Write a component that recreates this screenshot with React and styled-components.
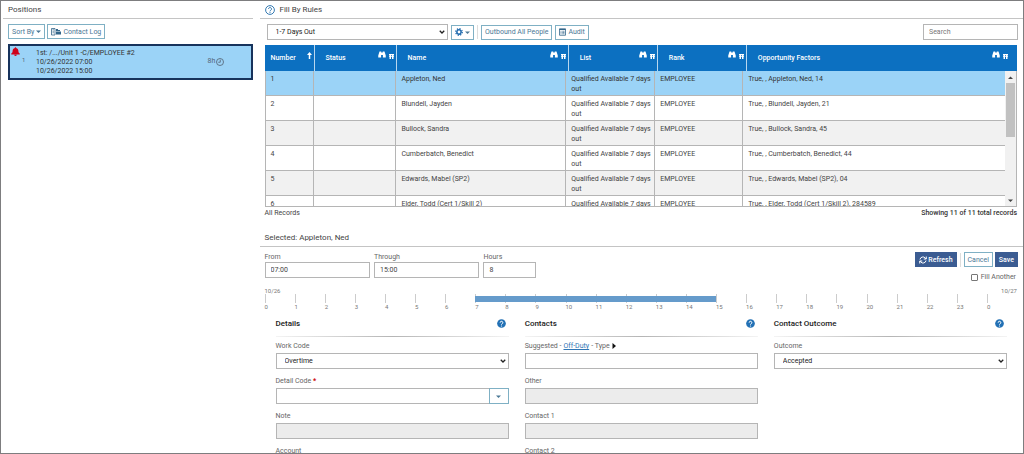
import React from "react";
import styled, { createGlobalStyle, css } from "styled-components";

const GlobalStyle = createGlobalStyle`
  *, *::before, *::after { box-sizing: border-box; }
  body {
    margin: 0;
    background: #fff;
    color: #444;
    font: 400 7px/10px Roboto, "Liberation Sans", sans-serif;
  }
  button, input, select { font: inherit; color: inherit; margin: 0; border-radius: 0; }
  h1, h2, h3, p { margin: 0; font: inherit; }
  svg { display: block; flex: none; }
`;

const Frame = styled.div`
  display: grid;
  grid-template-columns: minmax(0, 1fr) minmax(0, 3fr);
  height: 100vh;
  overflow: hidden;
  border: 1px solid #7d7d7f;
`;

const Sidebar = styled.aside`
  padding: 0 4px 0 2px;
`;

const Main = styled.main`
  padding-left: 3px;
`;

const Heading = styled.h2`
  display: flex;
  align-items: center;
  gap: 5px;
  height: 18px;
  padding-left: 5px;
  border-bottom: 1px solid #c4c4c4;
  font-size: 8px;
  line-height: 18px;
  color: #444;
`;

const Toolbar = styled.div`
  display: flex;
  align-items: center;
  gap: 2px;
  padding: 5px 0 5px 5px;
`;

const RulesToolbar = styled(Toolbar)`
  gap: 3px;
  padding-left: 7px;
`;

const Divider = styled.span`
  width: 1px;
  height: 14px;
  margin: 0 ${(p) => p.$gap || 0}px;
  background: #ddd;
`;

const Button = styled.button`
  display: flex;
  align-items: center;
  justify-content: center;
  gap: ${(p) => (p.$primary ? 1 : 2)}px;
  height: 15px;
  padding: 0 3px;
  border: 1px solid ${(p) => (p.$primary ? "#3b5c92" : "#7fb0c4")};
  background: ${(p) => (p.$primary ? "#3b5c92" : "#fff")};
  color: ${(p) => (p.$primary ? "#fff" : "#4a7896")};
  font-weight: ${(p) => (p.$primary ? 500 : 400)};
  white-space: nowrap;
`;

const PositionCard = styled.article`
  display: grid;
  grid-template-columns: 24px 1fr 44px;
  margin: 0 0 0 5px;
  height: 36px;
  border: 1px solid #17335c;
  outline: 1px solid #17335c;
  outline-offset: -2px;
  background: #9bd3f7;
  color: #333;
  line-height: 9px;
`;

const Alert = styled.div`
  display: flex;
  gap: 2px;
  padding: 2px 0 0 2px;
  line-height: 25px;
  color: #567;
  font-size: 6px;
`;

const PositionText = styled.div`
  padding: 4px 0 0 3px;
`;

const Duration = styled.div`
  display: flex;
  align-items: center;
  align-self: start;
  gap: 1px;
  padding-top: 12px;
  color: #567;
`;

const SelectBox = styled.div`
  display: grid;
  align-items: center;
  width: ${(p) => p.$width || "100%"};
  height: 16px;
  > * { grid-area: 1 / 1; }
  > svg { justify-self: end; margin-right: 3px; pointer-events: none; }
`;

const NativeSelect = styled.select`
  appearance: none;
  width: 100%;
  height: 100%;
  padding: 0 8px;
  border: 1px solid #b5b5b5;
  background: #fff;
  color: #222;
`;

const TextInput = styled.input`
  display: block;
  width: ${(p) => p.$width || "100%"};
  min-width: 0;
  height: ${(p) => p.$height || 16}px;
  padding: 0 5px;
  border: 1px solid #b5b5b5;
  background: #fff;
  &:disabled { background: #ececec; }
  &::placeholder { color: #777; }
`;

const Search = styled(TextInput)`
  margin-left: auto;
  margin-right: 5px;
`;

const Records = styled.section`
  margin: 0 6px 0 5px;
`;

const columns = (list) => css`
  display: grid;
  grid-template-columns: ${list.map((n) => `minmax(0, ${n}fr)`).join(" ")};
`;

const HeadTable = styled.table`
  display: block;
  thead { display: block; }
  tr { ${columns([50, 82, 172, 89, 89, 270])} }
  th {
    display: flex;
    justify-content: space-between;
    height: 26px;
    padding: 0 2px 0 11px;
    border-right: 1px solid #b9d7ef;
    background: #0c70c1;
    color: #fff;
    font-weight: 500;
    line-height: 26px;
    text-align: left;
  }
  th:first-child { padding-left: 6px; }
  th:last-child { border-right: 0; padding-right: 9px; }
`;

const HeadIcons = styled.span`
  display: flex;
  align-items: flex-end;
  gap: 3px;
  height: 14px;
  > svg:first-child:not(:last-child) { margin-bottom: 1px; }
`;

const BodyArea = styled.div`
  display: flex;
  height: 136px;
  border: 1px solid #b5b5b5;
  border-top: 0;
  overflow: hidden;
`;

const BodyTable = styled.table`
  display: block;
  flex: 1;
  tbody { display: block; }
  tr {
    ${columns([49, 82, 170, 89, 88, 262])}
    background: #fff;
    border-bottom: 1px solid #b5b5b5;
  }
  tr:nth-child(odd) { background: #f1f1f1; }
  tr:first-child { background: #9bd3f7; color: #333; }
  td { padding: 3px 1px 1px 5px; border-right: 1px solid #b5b5b5; min-height: 24px; }
  td:last-child { border-right: 0; }
`;

const ScrollTrack = styled.div`
  display: flex;
  flex-direction: column;
  align-items: center;
  width: 11px;
  background: #f1f1f1;
`;

const ScrollButton = styled.button`
  display: flex;
  align-items: center;
  justify-content: center;
  width: 100%;
  height: 12px;
  padding: 0;
  border: 0;
  background: #f1f1f1;
  color: #444;
`;

const ScrollThumb = styled.div`
  width: 9px;
  height: 54px;
  margin-bottom: auto;
  background: #c1c1c1;
`;

const RecordsFooter = styled.footer`
  display: flex;
  justify-content: space-between;
  padding-top: 1px;
`;

const RecordCount = styled.span`
  color: #333;
  font-weight: 500;
`;

const SelectedHeading = styled(Heading)`
  margin-top: 11px;
`;

const ShiftForm = styled.form`
  display: flex;
  gap: 4px;
  padding: 5px 5px 0 5px;
`;

const Field = styled.div`
  width: ${(p) => p.$width};
`;

const Label = styled.label`
  display: block;
  color: #666;
`;

const Actions = styled.div`
  display: grid;
  justify-items: end;
  gap: 5px;
  margin-left: auto;
`;

const ButtonRow = styled.div`
  display: flex;
  align-items: center;
  gap: 2px;
`;

const CheckLabel = styled.label`
  display: flex;
  align-items: center;
  gap: 3px;
  padding-right: 2px;
  color: #666;
`;

const Checkbox = styled.input`
  appearance: none;
  width: 7px;
  height: 7px;
  border: 1px solid #777;
  border-radius: 1px;
  background: #fff;
  &:checked { background: #0c70c1; }
`;

const Timeline = styled.section`
  padding: 5px 6px 0 5px;
  font-size: 6px;
  color: #777;
`;

const TimelineDates = styled.div`
  display: flex;
  justify-content: space-between;
  line-height: 7px;
`;

const Hours = styled.div`
  display: grid;
  grid-template-columns: repeat(25, minmax(0, 1fr));
`;

const Hour = styled.span`
  grid-area: 1 / ${(p) => p.$col};
  line-height: 7px;
  &::before {
    content: "";
    display: block;
    height: 9px;
    border-left: 1px solid #ccc;
  }
`;

const ShiftBar = styled.div`
  grid-area: 1 / ${(p) => p.$from} / 2 / ${(p) => p.$to};
  height: 6px;
  margin-top: 2px;
  background: #659bcb;
`;

const Panels = styled.div`
  display: grid;
  grid-template-columns: repeat(3, minmax(0, 1fr));
  gap: 16px;
  padding: 8px 16px 0;
`;

const PanelTitle = styled.h3`
  display: flex;
  align-items: center;
  justify-content: space-between;
  height: 19px;
  padding: 0 3px 7px 0;
  margin-bottom: 4px;
  border-bottom: 1px solid;
  border-image: linear-gradient(90deg, #f4f4f4, #b5b5b5 50%, #f4f4f4) 1;
  color: #222;
  font-size: 8px;
  font-weight: 500;
`;

const PanelField = styled.div`
  margin-bottom: 7px;
  > ${Label}, > p { margin-bottom: 2px; color: #666; }
`;

const SuggestedLine = styled.p`
  display: flex;
  align-items: center;
  gap: 2px;
  a { color: #2f76b5; }
`;

const Required = styled.span`
  color: #c00;
  font-weight: 700;
`;

const Combo = styled.div`
  display: flex;
`;

const ComboButton = styled(Button)`
  flex: none;
  width: 20px;
  height: 16px;
  padding: 0;
  margin-left: -1px;
`;

const Caret = () => (
  <svg width="5" height="5" viewBox="0 0 10 10" aria-hidden="true">
    <path d="M0 3h10L5 8z" fill="currentColor" />
  </svg>
);

const CaretUp = () => (
  <svg width="5" height="5" viewBox="0 0 10 10" aria-hidden="true">
    <path d="M0 8h10L5 3z" fill="currentColor" />
  </svg>
);

const Chevron = () => (
  <svg width="6" height="6" viewBox="0 0 12 12" aria-hidden="true">
    <path d="M1.500 3.500L6 8l4.500-4.500" fill="none" stroke="#222" strokeWidth="2.600" />
  </svg>
);

const Bell = () => (
  <svg width="9" height="9" viewBox="0 0 18 18" aria-hidden="true">
    <path d="M9 0.500a1.300 1.300 0 0 1 1.300 1.600C13 2.800 14.800 5 14.800 8c0 3 .7 3.500 2.700 5V15H.5v-2C2.500 11.500 3.200 11 3.200 8c0-3 1.800-5.200 4.500-5.900A1.300 1.300 0 0 1 9 .5zM6.500 15.500h5a2.500 2.500 0 0 1-5 0z" fill="#d0021b" />
  </svg>
);

const Clock = () => (
  <svg width="8" height="8" viewBox="0 0 16 16" fill="none" stroke="#567" strokeWidth="1.700" aria-hidden="true">
    <circle cx="8" cy="8" r="7" />
    <path d="M8.500 3.500v5H4.500" />
  </svg>
);

const ContactIcon = () => (
  <svg width="10" height="8" viewBox="0 0 20 16" aria-hidden="true">
    <path d="M1 1h7v13H1z" fill="none" stroke="#33668a" strokeWidth="1.600" />
    <path d="M3 3.500h3M3 6.500h3M3 9.500h3" stroke="#33668a" strokeWidth="1.300" />
    <path d="M10 7h10v6H10zM10 2h4v4h-4zM14 4h4v2h-4z" fill="#33668a" />
  </svg>
);

const Gear = () => (
  <svg width="8" height="8" viewBox="0 0 16 16" fill="none" stroke="#1d68ad" aria-hidden="true">
    <circle cx="8" cy="8" r="4.300" strokeWidth="3" />
    <circle cx="8" cy="8" r="6.600" strokeWidth="2.400" strokeDasharray="2.600 2.580" />
  </svg>
);

const AuditIcon = () => (
  <svg width="7" height="8" viewBox="0 0 14 16" fill="none" stroke="#33668a" aria-hidden="true">
    <path d="M1 1.500h12v13H1z" strokeWidth="1.600" />
    <path d="M1 3h12" strokeWidth="2" />
    <path d="M3 6.500h2M6.500 6.500H11M3 9h2M6.500 9H11M3 11.500h2M6.500 11.500H11" strokeWidth="1.400" />
  </svg>
);

const HelpOutline = () => (
  <svg width="10" height="10" viewBox="0 0 20 20" fill="none" stroke="#2a73ae" aria-hidden="true">
    <circle cx="10" cy="10" r="8.800" strokeWidth="1.900" />
    <path d="M7 8a3 3 0 1 1 4.500 2.600C10.300 11.300 10 11.700 10 12.700" strokeWidth="1.900" />
    <circle cx="10" cy="15" r=".8" strokeWidth="1" />
  </svg>
);

const HelpSolid = () => (
  <svg width="9" height="9" viewBox="0 0 18 18" role="img" aria-label="Help">
    <circle cx="9" cy="9" r="8.700" fill="#2371b5" />
    <path d="M6.300 7.300a2.700 2.700 0 1 1 4 2.300C9.300 10.200 9 10.500 9 11.500" fill="none" stroke="#fff" strokeWidth="2" />
    <circle cx="9" cy="14" r="1.200" fill="#fff" />
  </svg>
);

const Binoculars = () => (
  <svg width="8" height="7" viewBox="0 0 16 14" fill="#fff" aria-hidden="true">
    <path d="M3 1h3.500v2H9.500V1H13l2.500 8v4H9.800V8H6.200v5H.5V9z" />
  </svg>
);

const ColumnMenu = () => (
  <svg width="5" height="5" viewBox="0 0 10 10" fill="#fff" aria-hidden="true">
    <path d="M0 0h10v2.500H9V10H6V2.500H4V10H1V2.500H0zM0 4.500h10v1.500H0z" />
  </svg>
);

const SortUp = () => (
  <svg width="5" height="7" viewBox="0 0 10 14" aria-hidden="true">
    <path d="M5 0l5 6H6.500v8h-3V6H0z" fill="#fff" />
  </svg>
);

const RefreshIcon = () => (
  <svg width="8" height="8" viewBox="0 0 16 16" fill="none" stroke="#fff" strokeWidth="2" aria-hidden="true">
    <path d="M2 7a6 6 0 0 1 10.500-3L14.500 6M14.500 1v5h-5M14 9a6 6 0 0 1-10.500 3L1.500 10M1.500 15v-5h5" />
  </svg>
);

const PlayMark = () => (
  <svg width="4" height="6" viewBox="0 0 8 12" aria-hidden="true">
    <path d="M1 0l7 6-7 6z" fill="#111" />
  </svg>
);

const Select = ({ id, value, width, label }) => (
  <SelectBox $width={width}>
    <NativeSelect id={id} aria-label={label} defaultValue={value}>
      <option>{value}</option>
    </NativeSelect>
    <Chevron />
  </SelectBox>
);

const headers = ["Status", "Name", "List", "Rank", "Opportunity Factors"];

const people = [
  ["Appleton, Ned", "14"],
  ["Blundell, Jayden", "21"],
  ["Bullock, Sandra", "45"],
  ["Cumberbatch, Benedict", "44"],
  ["Edwards, Mabel (SP2)", "04"],
  ["Elder, Todd (Cert 1/Skill 2)", "284589"],
];

const DisabledField = ({ id, label, height }) => (
  <PanelField>
    <Label htmlFor={id}>{label}</Label>
    <TextInput id={id} disabled $height={height} />
  </PanelField>
);

export default function App() {
  return (
    <>
      <GlobalStyle />
      <Frame>
        <Sidebar>
          <Heading>Positions</Heading>
          <Toolbar>
            <Button>Sort By <Caret /></Button>
            <Button><ContactIcon /> Contact Log</Button>
          </Toolbar>
          <PositionCard>
            <Alert><Bell />1</Alert>
            <PositionText>
              <p>1st: /.../Unit 1 -C/EMPLOYEE #2</p>
              <p>10/26/2022 07:00</p>
              <p>10/26/2022 15:00</p>
            </PositionText>
            <Duration>8h<Clock /></Duration>
          </PositionCard>
        </Sidebar>

        <Main>
          <Heading><HelpOutline /> Fill By Rules</Heading>
          <RulesToolbar>
            <Select label="Fill rule" value="1-7 Days Out" width="24%" />
            <Button aria-label="Settings"><Gear /> <Caret /></Button>
            <Divider />
            <Button>Outbound All People</Button>
            <Button><AuditIcon /> Audit</Button>
            <Search type="search" placeholder="Search" aria-label="Search" $width="95px" />
          </RulesToolbar>

          <Records>
            <HeadTable>
              <thead>
                <tr>
                  <th scope="col">Number<HeadIcons><SortUp /></HeadIcons></th>
                  {headers.map((h) => (
                    <th scope="col" key={h}>{h}<HeadIcons><Binoculars /><ColumnMenu /></HeadIcons></th>
                  ))}
                </tr>
              </thead>
            </HeadTable>
            <BodyArea>
              <BodyTable>
                <tbody>
                  {people.map(([name, score], i) => (
                    <tr key={name}>
                      <td>{i + 1}</td>
                      <td />
                      <td>{name}</td>
                      <td>Qualified Available 7 days out</td>
                      <td>EMPLOYEE</td>
                      <td>{`True, , ${name}, ${score}`}</td>
                    </tr>
                  ))}
                </tbody>
              </BodyTable>
              <ScrollTrack>
                <ScrollButton aria-label="Scroll up"><CaretUp /></ScrollButton>
                <ScrollThumb />
                <ScrollButton aria-label="Scroll down"><Caret /></ScrollButton>
              </ScrollTrack>
            </BodyArea>
            <RecordsFooter>
              <span>All Records</span>
              <RecordCount>Showing 11 of 11 total records</RecordCount>
            </RecordsFooter>
          </Records>

          <SelectedHeading>Selected: Appleton, Ned</SelectedHeading>
          <ShiftForm onSubmit={(e) => e.preventDefault()}>
            <Field $width="14%">
              <Label htmlFor="from">From</Label>
              <TextInput id="from" defaultValue="07:00" />
            </Field>
            <Field $width="14%">
              <Label htmlFor="through">Through</Label>
              <TextInput id="through" defaultValue="15:00" />
            </Field>
            <Field $width="7%">
              <Label htmlFor="hours">Hours</Label>
              <TextInput id="hours" defaultValue="8" />
            </Field>
            <Actions>
              <ButtonRow>
                <Button type="button" $primary><RefreshIcon /> Refresh</Button>
                <Divider $gap={1} />
                <Button type="button">Cancel</Button>
                <Button type="submit" $primary>Save</Button>
              </ButtonRow>
              <CheckLabel><Checkbox type="checkbox" /> Fill Another</CheckLabel>
            </Actions>
          </ShiftForm>

          <Timeline>
            <TimelineDates><span>10/26</span><span>10/27</span></TimelineDates>
            <Hours>
              {Array.from({ length: 25 }, (_, i) => (
                <Hour key={i} $col={i + 1}>{i % 24}</Hour>
              ))}
              <ShiftBar $from={8} $to={16} />
            </Hours>
          </Timeline>

          <Panels>
            <section>
              <PanelTitle>Details <HelpSolid /></PanelTitle>
              <PanelField>
                <Label htmlFor="work">Work Code</Label>
                <Select id="work" value="Overtime" />
              </PanelField>
              <PanelField>
                <Label htmlFor="detail">Detail Code <Required>*</Required></Label>
                <Combo>
                  <TextInput id="detail" />
                  <ComboButton type="button" aria-label="Show detail codes"><Caret /></ComboButton>
                </Combo>
              </PanelField>
              <DisabledField id="note" label="Note" />
              <DisabledField id="account" label="Account" />
            </section>
            <section>
              <PanelTitle>Contacts <HelpSolid /></PanelTitle>
              <PanelField>
                <SuggestedLine>Suggested - <a href="#off-duty">Off-Duty</a> - Type <PlayMark /></SuggestedLine>
                <TextInput aria-label="Suggested contact" />
              </PanelField>
              <DisabledField id="other" label="Other" />
              <DisabledField id="contact1" label="Contact 1" />
              <DisabledField id="contact2" label="Contact 2" />
            </section>
            <section>
              <PanelTitle>Contact Outcome <HelpSolid /></PanelTitle>
              <PanelField>
                <Label htmlFor="outcome">Outcome</Label>
                <Select id="outcome" value="Accepted" />
              </PanelField>
            </section>
          </Panels>
        </Main>
      </Frame>
    </>
  );
}
